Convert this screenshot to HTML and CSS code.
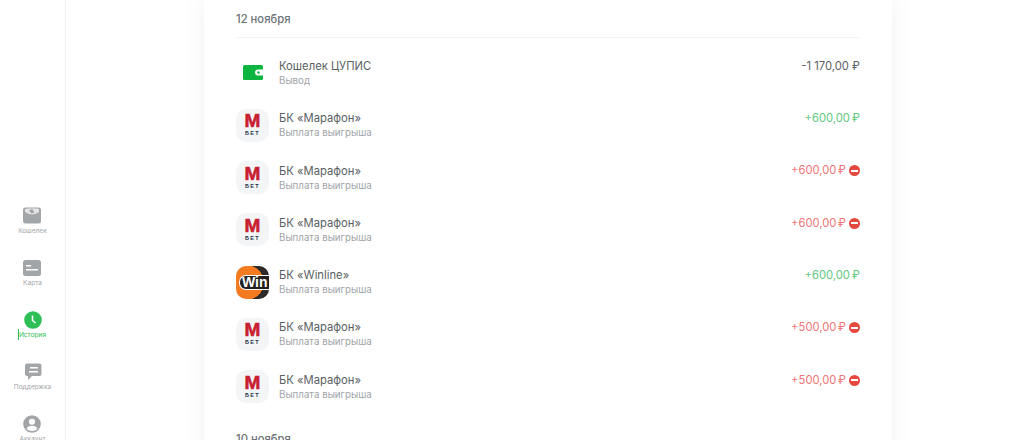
FILE: index.html
```html
<!DOCTYPE html>
<html lang="ru">
<head>
  <meta charset="UTF-8">
  <title>История</title>
  <link rel="stylesheet" href="styles.css">
</head>
<body>
  <div class="page">
    <nav class="sidebar">
      <div class="nav-item">
        <svg class="nav-icon" viewBox="0 0 18 18"><path d="M2.500 .5H15.500Q18 .5 18 3V14Q18 16.500 15.500 16.500H2.500Q0 16.500 0 14V3Q0 .5 2.500 .5Z" fill="#a3a6a8"/><path d="M2 3Q2 1.500 3.500 1.500H14.500Q16 1.500 16 3V5Q12 7.500 9 7.500T2 5Z" fill="#e3e4e5"/><path d="M6 3.500 9 2 11.500 5.500 8.500 6.500Z" fill="#a3a6a8"/></svg>
        <span>Кошелек</span>
      </div>
      <div class="nav-item">
        <svg class="nav-icon" viewBox="0 0 18 18"><rect y="1" width="18" height="16" rx="2.500" fill="#a3a6a8"/><rect x="3" y="6" width="5" height="1.500" fill="#fff"/><rect x="3" y="10" width="12" height="1.500" fill="#fff"/></svg>
        <span>Карта</span>
      </div>
      <div class="nav-item nav-active">
        <svg class="nav-icon" viewBox="0 0 18 18"><circle cx="9" cy="9" r="8.800" fill="#2fbf57"/><path d="M8.500 4.500V9.500L11.500 12" fill="none" stroke="#fff" stroke-width="1.500"/></svg>
        <span class="nav-label"><i class="caret"></i>История</span>
      </div>
      <div class="nav-item">
        <svg class="nav-icon" viewBox="0 0 18 18"><path d="M3 .5H15.500Q17.500 .5 17.500 2.500V11Q17.500 13 15.500 13H8L4 17V13H3Q1 13 1 11V2.500Q1 .5 3 .5Z" fill="#a3a6a8"/><rect x="6" y="4" width="8" height="1.500" fill="#fff"/><rect x="5" y="8" width="9" height="1.500" fill="#fff"/></svg>
        <span>Поддержка</span>
      </div>
      <div class="nav-item">
        <svg class="nav-icon" viewBox="0 0 18 18"><circle cx="9" cy="9" r="8.800" fill="#a3a6a8"/><circle cx="9" cy="6.800" r="3" fill="#fff"/><path d="M3.500 14Q5 10.800 9 10.800T14.500 14Q12.500 16 9 16T3.500 14Z" fill="#fff"/></svg>
        <span>Аккаунт</span>
      </div>
    </nav>

    <main class="card">
      <div class="date date-first">12 ноября</div>
      <ul class="list">
        <li class="row">
          <div class="logo logo-plain">
            <svg class="wallet" viewBox="0 0 20 15"><rect width="20" height="15" rx="1.500" fill="#0bb53f"/><path d="M20 4.500H15A3 3 0 0 0 15 10.500H20Z" fill="#fff"/><circle cx="15.500" cy="7.500" r="1.200" fill="#0bb53f"/></svg>
          </div>
          <div class="info"><div class="name">Кошелек ЦУПИС</div><div class="type">Вывод</div></div>
          <div class="sum">-1 170,00 ₽</div>
        </li>
        <li class="row">
          <div class="logo logo-m"><b>М</b><small>БЕТ</small></div>
          <div class="info"><div class="name">БК «Марафон»</div><div class="type">Выплата выигрыша</div></div>
          <div class="sum sum-plus">+600,00 ₽</div>
        </li>
        <li class="row">
          <div class="logo logo-m"><b>М</b><small>БЕТ</small></div>
          <div class="info"><div class="name">БК «Марафон»</div><div class="type">Выплата выигрыша</div></div>
          <div class="sum sum-fail">+600,00 ₽<i class="stop"></i></div>
        </li>
        <li class="row">
          <div class="logo logo-m"><b>М</b><small>БЕТ</small></div>
          <div class="info"><div class="name">БК «Марафон»</div><div class="type">Выплата выигрыша</div></div>
          <div class="sum sum-fail">+600,00 ₽<i class="stop"></i></div>
        </li>
        <li class="row">
          <div class="logo logo-win"><span class="win-word">Win</span></div>
          <div class="info"><div class="name">БК «Winline»</div><div class="type">Выплата выигрыша</div></div>
          <div class="sum sum-plus">+600,00 ₽</div>
        </li>
        <li class="row">
          <div class="logo logo-m"><b>М</b><small>БЕТ</small></div>
          <div class="info"><div class="name">БК «Марафон»</div><div class="type">Выплата выигрыша</div></div>
          <div class="sum sum-fail">+500,00 ₽<i class="stop"></i></div>
        </li>
        <li class="row">
          <div class="logo logo-m"><b>М</b><small>БЕТ</small></div>
          <div class="info"><div class="name">БК «Марафон»</div><div class="type">Выплата выигрыша</div></div>
          <div class="sum sum-fail">+500,00 ₽<i class="stop"></i></div>
        </li>
      </ul>
      <div class="date">10 ноября</div>
    </main>
  </div>
</body>
</html>
```

FILE: styles.css
```css
html, body {
  margin: 0;
  height: 100%;
  overflow: hidden;
  background: #fff;
}
body {
  font-family: "Inter", "Liberation Sans", sans-serif;
  color: #555b60;
}
.page {
  display: flex;
  height: 440px;
  overflow: hidden;
}
.sidebar {
  flex: 0 0 65px;
  border-right: 1px solid #f1f2f3;
  padding-top: 207px;
  display: flex;
  flex-direction: column;
  align-items: center;
  gap: 17px;
}
.nav-item {
  flex-shrink: 0;
  display: flex;
  flex-direction: column;
  align-items: center;
  height: 35.100px;
  font-size: 6.600px;
  line-height: 10px;
  color: #a3a6a8;
}
.nav-icon {
  width: 18px;
  height: 18px;
  margin-bottom: 1px;
}
.nav-active {
  color: #2fbf57;
}
.nav-label {
  position: relative;
}
.caret {
  position: absolute;
  left: -1px;
  top: -1px;
  height: 11px;
  width: 1px;
  background: #2fbf57;
}
.card {
  width: 624px;
  margin-left: 138px;
  padding: 0 32px;
  box-shadow: 0 0 24px rgba(0, 0, 0, .06);
  height: 480px;
  flex-shrink: 0;
}
.date {
  font-size: 11.250px;
  font-weight: 500;
  line-height: 15px;
  color: #6d7276;
  padding-top: 19px;
}
.date-first {
  padding-top: 12px;
  padding-bottom: 10px;
  border-bottom: 1px solid #f1f2f3;
}
.list {
  list-style: none;
  margin: 0;
  padding: 8.700px 0 0;
}
.row {
  display: flex;
  align-items: center;
  height: 52.330px;
}
.logo {
  flex: 0 0 33px;
  height: 33px;
  border-radius: 10px;
  margin-right: 10px;
  display: flex;
  flex-direction: column;
  align-items: center;
  justify-content: center;
  overflow: hidden;
}
.logo-m {
  background: #f3f5f7;
}
.logo-m b {
  font-family: "Liberation Sans", sans-serif;
  font-size: 19px;
  line-height: 14px;
  color: #c8202f;
  -webkit-text-stroke: .6px #c8202f;
}
.logo-m small {
  font-family: "Liberation Sans", sans-serif;
  font-size: 5.500px;
  line-height: 6px;
  font-weight: 700;
  letter-spacing: 1.400px;
  color: #28324a;
  margin-top: 2px;
}
.wallet {
  width: 20px;
  height: 15px;
}
.logo-win {
  background: radial-gradient(circle at 32% 50%, #f47a20 0 17px, #2d2a28 17.500px);
  align-items: flex-end;
}
.win-word {
  font-family: "Liberation Sans", sans-serif;
  font-size: 14px;
  font-weight: 700;
  line-height: 13px;
  color: #fff;
  background: #23211f;
  border: 1px solid #fff;
  border-right: 0;
  border-radius: 7px 0 0 7px;
  padding-left: 2px;
  width: 27px;
  overflow: hidden;
}
.info {
  flex: 1;
}
.name {
  font-size: 11.250px;
  line-height: 15px;
  padding-top: 1px;
  color: #5a5f64;
}
.type {
  font-size: 9.750px;
  line-height: 14px;
  color: #a0a4a8;
}
.sum {
  display: flex;
  align-items: center;
  font-size: 11.250px;
  line-height: 15px;
  color: #5a5f64;
  align-self: flex-start;
  padding-top: 12px;
}
.sum-plus {
  color: #62c97f;
  word-spacing: -1px;
}
.sum-fail {
  color: #ee7676;
  word-spacing: -1.500px;
}
.stop {
  width: 11px;
  height: 11px;
  border-radius: 50%;
  background: #e5483e;
  margin-left: 3px;
  position: relative;
}
.stop::after {
  content: "";
  position: absolute;
  left: 2px;
  right: 2px;
  top: 4.500px;
  height: 2px;
  background: #fff;
}
```
